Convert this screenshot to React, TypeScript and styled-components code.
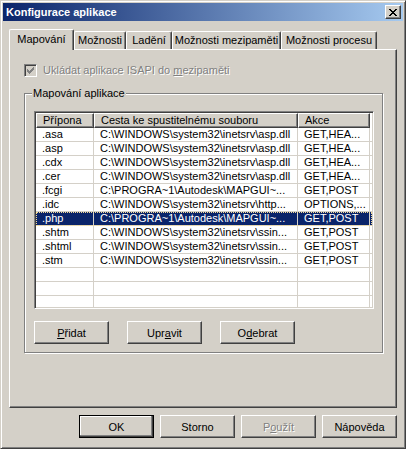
import styled, { createGlobalStyle, css } from 'styled-components'

const GlobalStyle = createGlobalStyle`
  html, body {
    margin: 0;
    padding: 0;
    background: #d4d0c8;
  }
`

const FONT = `'Liberation Sans', Arial, sans-serif`

interface Mapping {
  ext: string
  path: string
  verbs: string
}

const ASP = 'C:\\WINDOWS\\system32\\inetsrv\\asp.dll'
const MAPGUI = 'C:\\PROGRA~1\\Autodesk\\MAPGUI~...'
const SSINC = 'C:\\WINDOWS\\system32\\inetsrv\\ssin...'

const mappings: Mapping[] = [
  { ext: '.asa', path: ASP, verbs: 'GET,HEA...' },
  { ext: '.asp', path: ASP, verbs: 'GET,HEA...' },
  { ext: '.cdx', path: ASP, verbs: 'GET,HEA...' },
  { ext: '.cer', path: ASP, verbs: 'GET,HEA...' },
  { ext: '.fcgi', path: MAPGUI, verbs: 'GET,POST' },
  { ext: '.idc', path: 'C:\\WINDOWS\\system32\\inetsrv\\http...', verbs: 'OPTIONS,...' },
  { ext: '.php', path: MAPGUI, verbs: 'GET,POST' },
  { ext: '.shtm', path: SSINC, verbs: 'GET,POST' },
  { ext: '.shtml', path: SSINC, verbs: 'GET,POST' },
  { ext: '.stm', path: SSINC, verbs: 'GET,POST' }
]

const SELECTED = '.php'
const EMPTY_ROWS = 3

const columns = [
  { title: 'Přípona', width: 58 },
  { title: 'Cesta ke spustitelnému souboru', width: 204 },
  { title: 'Akce', width: 72 }
]

const tabs = [
  { label: 'Mapování', width: 65, active: true },
  { label: 'Možnosti', width: 52 },
  { label: 'Ladění', width: 46 },
  { label: 'Možnosti mezipaměti', width: 109 },
  { label: 'Možnosti procesu', width: 96 }
]

const CloseGlyph = () => (
  <svg width="8" height="7" viewBox="0 0 8 7" shapeRendering="crispEdges">
    <path
      fill="#000"
      d="M0 0h2v1H0zM6 0h2v1H6zM1 1h2v1H1zM5 1h2v1H5zM2 2h4v1H2zM3 3h2v1H3zM2 4h4v1H2zM1 5h2v1H1zM5 5h2v1H5zM0 6h2v1H0zM6 6h2v1H6z"
    />
  </svg>
)

const CheckGlyph = () => (
  <svg width="7" height="7" viewBox="0 0 7 7" shapeRendering="crispEdges">
    <path fill="#808080" d="M6 0h1v3H6zM5 1h1v3H5zM4 2h1v3H4zM3 3h1v3H3zM2 4h1v3H2zM1 3h1v3H1zM0 2h1v3H0z" />
  </svg>
)

const App = () => {
  return (
    <>
      <GlobalStyle />
      <Window>
        <TitleBar>
          <Title>Konfigurace aplikace</Title>
          <CaptionButton>
            <CloseGlyph />
          </CaptionButton>
        </TitleBar>

        <Client>
          <TabRow>
            {tabs.map((t) => (
              <Tab key={t.label} $active={t.active} $w={t.width}>
                {t.label}
              </Tab>
            ))}
          </TabRow>

          <TabPanel>
            <CheckRow>
              <CheckBox>
                <CheckGlyph />
              </CheckBox>
              <DisabledText>
                Ukládat aplikace ISAPI do <u>m</u>ezipaměti
              </DisabledText>
            </CheckRow>

            <GroupBox>
              <GroupLegend>Mapování aplikace</GroupLegend>
              <ListView>
                <HeaderRow>
                  {columns.map((c) => (
                    <HeaderCell key={c.title} $w={c.width}>
                      {c.title}
                    </HeaderCell>
                  ))}
                </HeaderRow>
                {mappings.map((m) => (
                  <Row key={m.ext} $selected={m.ext === SELECTED}>
                    <Cell $w={columns[0].width}>{m.ext}</Cell>
                    <Cell $w={columns[1].width}>{m.path}</Cell>
                    <Cell $w={columns[2].width}>{m.verbs}</Cell>
                  </Row>
                ))}
                {Array.from({ length: EMPTY_ROWS }).map((_, i) => (
                  <Row key={`empty-${i}`}>
                    {columns.map((c) => (
                      <Cell key={c.title} $w={c.width} />
                    ))}
                  </Row>
                ))}
              </ListView>

              <GroupButtons>
                <Button>
                  <u>P</u>řidat
                </Button>
                <Button>
                  Upr<u>a</u>vit
                </Button>
                <Button>
                  O<u>d</u>ebrat
                </Button>
              </GroupButtons>
            </GroupBox>
          </TabPanel>

          <DialogButtons>
            <Button $default>OK</Button>
            <Button>Storno</Button>
            <Button disabled>
              P<u>o</u>užít
            </Button>
            <Button>Nápověda</Button>
          </DialogButtons>
        </Client>
      </Window>
    </>
  )
}

const raised = css`
  border: 1px solid;
  border-color: #fff #404040 #404040 #fff;
  box-shadow: inset -1px -1px #808080;
`

const Window = styled.div`
  width: 406px;
  height: 449px;
  box-sizing: border-box;
  background: #d4d0c8;
  border: 1px solid;
  border-color: #d4d0c8 #404040 #404040 #d4d0c8;
  box-shadow: inset 1px 1px #fff, inset -1px -1px #808080;
  padding: 2px;
  display: flex;
  flex-direction: column;
  font-family: ${FONT};
  font-size: 11px;
  color: #000;
  overflow: hidden;
`

const TitleBar = styled.div`
  height: 18px;
  flex: none;
  margin-bottom: 1px;
  padding: 0 2px 0 3px;
  display: flex;
  align-items: center;
  justify-content: space-between;
  background: linear-gradient(to right, #0a246a, #a6caf0);
`

const Title = styled.span`
  color: #fff;
  font-weight: bold;
  font-size: 11px;
  line-height: 13px;
`

const CaptionButton = styled.div`
  width: 16px;
  height: 14px;
  box-sizing: border-box;
  background: #d4d0c8;
  border: 1px solid;
  border-color: #fff #404040 #404040 #fff;
  box-shadow: inset -1px -1px #808080;
  display: flex;
  align-items: center;
  justify-content: center;
  padding-right: 1px;
`

const Client = styled.div`
  flex: 1;
  display: flex;
  flex-direction: column;
  padding: 7px 6px 0 6px;
`

const TabRow = styled.div`
  height: 20px;
  display: flex;
  align-items: flex-end;
  position: relative;
  z-index: 1;
`

const Tab = styled.div<{ $active?: boolean; $w: number }>`
  width: ${(p) => p.$w}px;
  height: ${(p) => (p.$active ? 21 : 18)}px;
  margin-bottom: ${(p) => (p.$active ? -1 : 0)}px;
  box-sizing: border-box;
  background: #d4d0c8;
  border-left: 1px solid #fff;
  border-top: 1px solid #fff;
  border-right: 1px solid #404040;
  border-radius: 2px 2px 0 0;
  box-shadow: inset -1px 0 #808080;
  display: flex;
  align-items: center;
  justify-content: center;
  padding-bottom: ${(p) => (p.$active ? 2 : 1)}px;
  white-space: nowrap;
  line-height: 13px;
`

const TabPanel = styled.div`
  height: 359px;
  flex: none;
  box-sizing: border-box;
  ${raised};
  padding: 14px 0 0 14px;
  display: flex;
  flex-direction: column;
`

const CheckRow = styled.div`
  display: flex;
  align-items: center;
  gap: 6px;
  height: 13px;
`

const CheckBox = styled.div`
  width: 13px;
  height: 13px;
  box-sizing: border-box;
  background: #d4d0c8;
  border: 1px solid;
  border-color: #808080 #fff #fff #808080;
  box-shadow: inset 1px 1px #404040, inset -1px -1px #d4d0c8;
  display: flex;
  align-items: center;
  justify-content: center;
`

const DisabledText = styled.span`
  color: #808080;
  text-shadow: 1px 1px #fff;
  line-height: 13px;
  white-space: nowrap;
`

const GroupBox = styled.fieldset`
  width: 359px;
  box-sizing: border-box;
  margin: 10px 0 0 0;
  padding: 11px 9px 8px 9px;
  border: 1px solid #808080;
  box-shadow: inset 1px 1px #fff, 1px 1px #fff;
  min-inline-size: 0;
`

const GroupLegend = styled.legend`
  margin-left: -2px;
  padding: 0 1px;
  line-height: 13px;
  background: #d4d0c8;
`

const ListView = styled.div`
  width: 340px;
  height: 198px;
  box-sizing: border-box;
  background: #fff;
  border: 1px solid;
  border-color: #808080 #fff #fff #808080;
  box-shadow: inset 1px 1px #404040, inset -1px -1px #d4d0c8;
  padding: 1px;
  overflow: hidden;
`

const HeaderRow = styled.div`
  display: flex;
  height: 15px;
`

const HeaderCell = styled.div<{ $w: number }>`
  width: ${(p) => p.$w}px;
  flex: none;
  box-sizing: border-box;
  background: #d4d0c8;
  ${raised};
  padding-left: 6px;
  line-height: 12px;
  white-space: nowrap;
  overflow: hidden;
`

const Row = styled.div<{ $selected?: boolean }>`
  display: flex;
  height: 14px;
  box-sizing: border-box;
  border-bottom: 1px solid #d4d0c8;
  ${(p) =>
    p.$selected &&
    css`
      background: #0a246a;
      color: #fff;
      outline: 1px dotted #f5db95;
      outline-offset: -1px;
    `}
`

const Cell = styled.div<{ $w: number }>`
  width: ${(p) => p.$w}px;
  flex: none;
  box-sizing: border-box;
  border-right: 1px solid #d4d0c8;
  padding-left: 6px;
  line-height: 13px;
  white-space: nowrap;
  overflow: hidden;
`

const GroupButtons = styled.div`
  display: flex;
  gap: 18px;
  margin-top: 12px;
`

const Button = styled.button<{ $default?: boolean }>`
  width: 75px;
  height: 23px;
  box-sizing: border-box;
  padding: 0;
  margin: 0;
  background: #d4d0c8;
  font-family: ${FONT};
  font-size: 11px;
  color: #000;
  ${raised};
  display: flex;
  align-items: center;
  justify-content: center;

  ${(p) =>
    p.$default &&
    css`
      border-color: #000;
      box-shadow: inset -1px -1px #404040, inset -2px -2px #808080, inset 1px 1px #fff;
    `}

  &:disabled {
    color: #808080;
    text-shadow: 1px 1px #fff;
  }
`

const DialogButtons = styled.div`
  display: flex;
  justify-content: flex-end;
  gap: 6px;
  margin-top: 7px;
`

export default App
